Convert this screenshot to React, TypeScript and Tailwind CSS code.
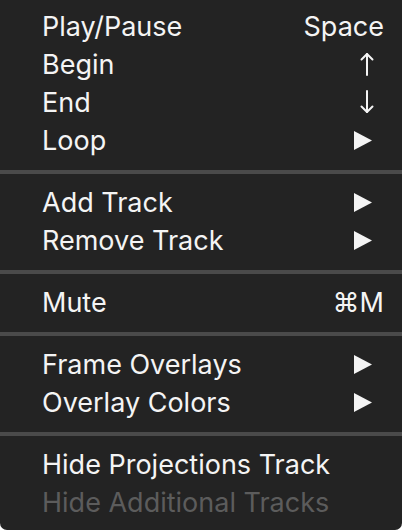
// Context menu - playback / track options
import clsx from 'clsx';

type Item = {
  label: string;
  shortcut?: 'space' | 'up' | 'down' | 'submenu' | 'cmdM';
  disabled?: boolean;
};

const groups: Item[][] = [
  [
    { label: 'Play/Pause', shortcut: 'space' },
    { label: 'Begin', shortcut: 'up' },
    { label: 'End', shortcut: 'down' },
    { label: 'Loop', shortcut: 'submenu' },
  ],
  [
    { label: 'Add Track', shortcut: 'submenu' },
    { label: 'Remove Track', shortcut: 'submenu' },
  ],
  [{ label: 'Mute', shortcut: 'cmdM' }],
  [
    { label: 'Frame Overlays', shortcut: 'submenu' },
    { label: 'Overlay Colors', shortcut: 'submenu' },
  ],
  [
    { label: 'Hide Projections Track' },
    { label: 'Hide Additional Tracks', disabled: true },
  ],
];

function Shortcut({ kind }: { kind: Item['shortcut'] }) {
  if (kind === 'space') return <span>Space</span>;
  if (kind === 'cmdM') return <span>⌘M</span>;
  if (kind === 'submenu') {
    return (
      <svg width="18" height="19" viewBox="0 0 18 19" className="mr-[12px]">
        <path d="M0 0 L18 9.5 L0 19 Z" fill="currentColor" />
      </svg>
    );
  }
  const up = kind === 'up';
  return (
    <svg width="14" height="24" viewBox="0 0 14 24" className="mr-[10px]">
      <g stroke="currentColor" strokeWidth="2" fill="none" strokeLinecap="round" strokeLinejoin="round">
        {up ? (
          <>
            <path d="M7 2 V23" />
            <path d="M1.5 7.5 L7 2 L12.5 7.5" />
          </>
        ) : (
          <>
            <path d="M7 1 V22" />
            <path d="M1.5 16.5 L7 22 L12.5 16.5" />
          </>
        )}
      </g>
    </svg>
  );
}

export default function App() {
  return (
    <div className="w-full h-[530px] bg-white">
      <div
        className="h-full bg-[#232323] rounded-b-[7px] pt-[7px] text-[27px] text-[#f4f4f4] leading-none"
        style={{ fontFamily: 'Inter, "Liberation Sans", sans-serif' }}
      >
        {groups.map((group, gi) => (
          <div key={gi}>
            {gi > 0 && (
              <div className="pt-[11px] pb-[9px]">
                <div className="h-[4px] bg-[#4a4a4a]" />
              </div>
            )}
            {group.map((item) => (
              <div
                key={item.label}
                className={clsx(
                  'h-[38px] flex items-center justify-between pl-[42px] pr-[18px]',
                  item.disabled && 'text-[#5c5c5c]'
                )}
              >
                <span>{item.label}</span>
                {item.shortcut && <Shortcut kind={item.shortcut} />}
              </div>
            ))}
          </div>
        ))}
      </div>
    </div>
  );
}
